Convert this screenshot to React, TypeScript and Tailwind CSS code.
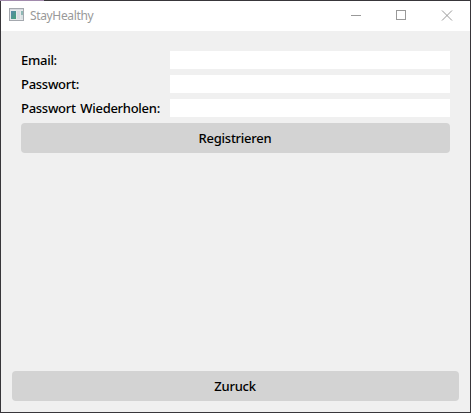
import type { ReactNode } from 'react';

const fields = [
  { label: 'Email:', type: 'email' },
  { label: 'Passwort:', type: 'password' },
  { label: 'Passwort Wiederholen:', type: 'password' },
];

function AppIcon() {
  return (
    <svg className="mb-0.5" width="16" height="14" viewBox="0 0 16 14" shapeRendering="crispEdges">
      <defs>
        <linearGradient id="pane" x1="0" y1="0" x2="1" y2="1">
          <stop offset="0" stopColor="#5788ab" />
          <stop offset="1" stopColor="#46a279" />
        </linearGradient>
      </defs>
      <path fill="#a4a8ae" d="M0 0h15v13H0z" />
      <path fill="#d7dadf" d="M1 1h13v1H1z" />
      <path fill="#e6e9eb" d="M1 2h13v10H1z" />
      <path fill="url(#pane)" d="M2 3h5v8H2z" />
      <path fill="#dadde2" d="M8 3h3v8H8z" />
      <path fill="#8fb8b5" d="M12 3h2v4h-2z" />
      <path fill="#d8e1e3" d="M12 7h2v4h-2z" />
    </svg>
  );
}

function Button({ children }: { children: ReactNode }) {
  return (
    <button className="flex h-[30px] w-full items-center justify-center rounded-[4px] bg-[#d3d3d3] pr-px text-[13px] leading-4 font-medium tracking-[-0.25px] text-black">
      {children}
    </button>
  );
}

export default function App() {
  return (
    <div className="flex h-[413px] w-[471px] flex-col border border-[#38363a] bg-[#f0f0f0] font-['Noto_Sans',sans-serif]">
      <header className="relative flex h-[30px] shrink-0 items-center bg-white pl-2">
        <div className="absolute -top-px -left-px h-px w-11 bg-[#a18aac]" />
        <AppIcon />
        <h1 className="ml-[5px] text-[12px] leading-4 font-normal tracking-[-0.35px] text-[#999999]">StayHealthy</h1>
        <svg className="ml-auto" width="137" height="30" fill="none" stroke="#999" shapeRendering="crispEdges">
          <path d="M18 14.5h10M63.5 9.5h9v9h-9z" />
          <path d="M109 9.5l10 10M119 9.5l-10 10" shapeRendering="auto" />
        </svg>
      </header>
      <main className="flex flex-1 flex-col justify-between pt-5 pr-[11px] pb-[11px] pl-[11px]">
        <form className="flex flex-col gap-1.5 pr-[9px] pl-[9px]">
          {fields.map((field) => (
            <label key={field.label} className="flex h-[18px] items-center text-[13px] font-medium text-black">
              <span className="w-[149px] shrink-0 leading-4 tracking-[-0.28px] [word-spacing:1.5px] whitespace-nowrap">
                {field.label}
              </span>
              <input type={field.type} className="h-[18px] min-w-0 flex-1 bg-white px-1 outline-none" />
            </label>
          ))}
          <Button>Registrieren</Button>
        </form>
        <Button>Zuruck</Button>
      </main>
    </div>
  );
}
